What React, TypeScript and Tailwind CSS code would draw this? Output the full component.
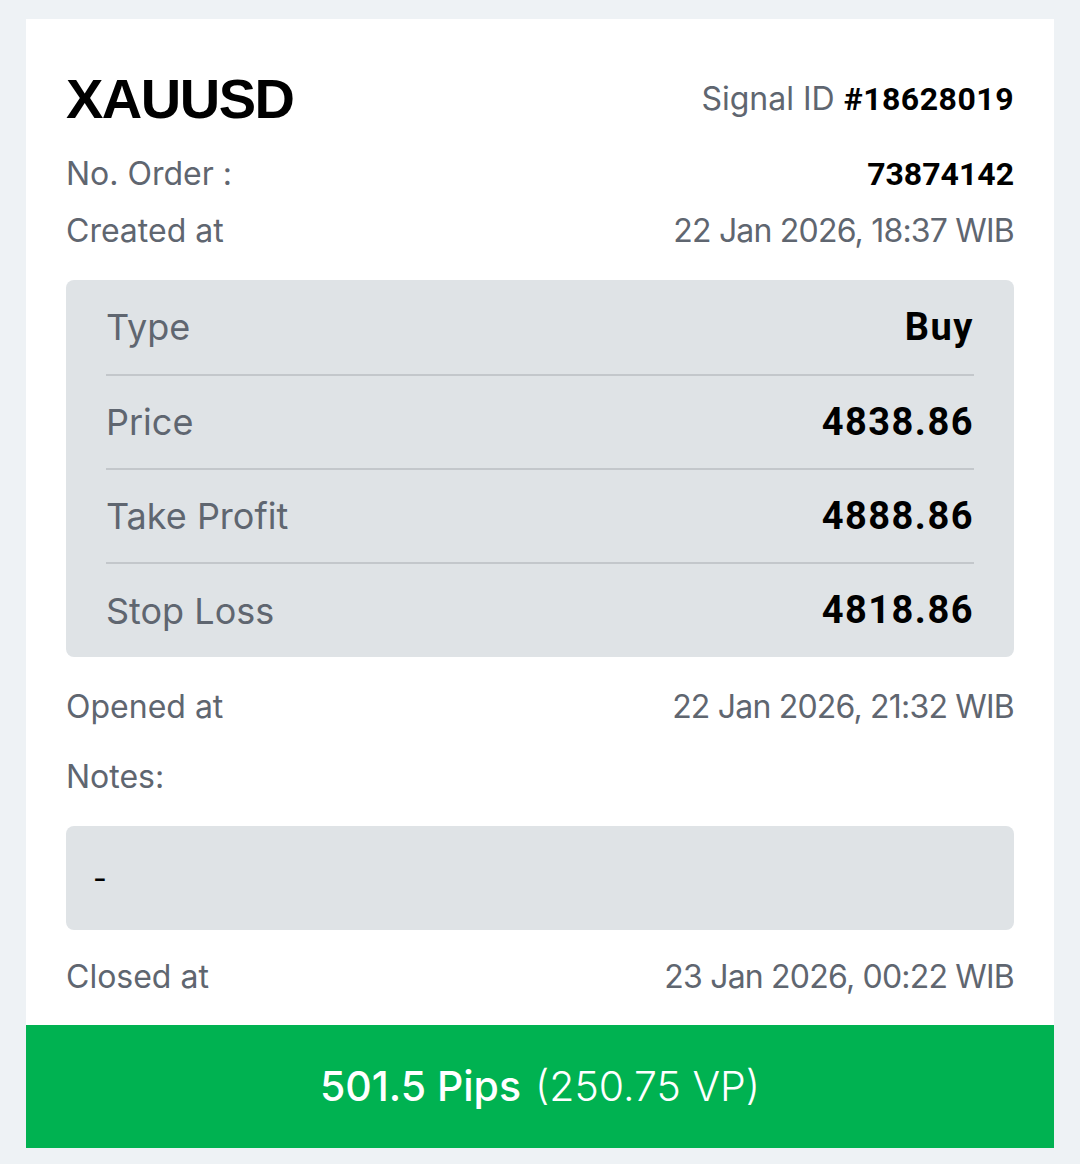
import React from 'react';

const label = "font-['Inter',sans-serif] text-[32px] text-[#5f6670]";
const date = "font-['Inter',sans-serif] text-[32px] tracking-[-0.8px] text-[#5f6670]";
const bold = "font-['Roboto',sans-serif] font-bold text-black";

function InfoRow({ left, right, className }: { left: React.ReactNode; right?: React.ReactNode; className: string }) {
  return (
    <div className={`flex items-center justify-between ${className}`}>
      <div className={label}>{left}</div>
      {right}
    </div>
  );
}

const detail = [
  { name: 'Type', value: 'Buy', h: 'h-[96px]' },
  { name: 'Price', value: '4838.86', h: 'h-[94px]' },
  { name: 'Take Profit', value: '4888.86', h: 'h-[94px]' },
  { name: 'Stop Loss', value: '4818.86', h: 'h-[93px]' },
];

export default function App() {
  return (
    <div className="min-h-[1164px] w-full bg-[#eef2f5] px-[26px] pt-[19px]">
      <div className="bg-white pt-[41px]">
        <div className="px-[40px]">
          <div className="flex h-[78px] items-center justify-between">
            <div className="font-['Liberation_Sans',sans-serif] text-[56px] font-bold tracking-[-1.5px] text-black">XAUUSD</div>
            <div className="flex items-baseline gap-[9px]">
              <span className={label}>Signal ID</span>
              <span className={`${bold} text-[32px] tracking-[0.5px]`}>#18628019</span>
            </div>
          </div>
          <InfoRow
            className="mt-[7px] h-[58px]"
            left="No. Order :"
            right={<span className={`${bold} text-[32px]`}>73874142</span>}
          />
          <InfoRow className="h-[56px]" left="Created at" right={<span className={date}>22 Jan 2026, 18:37 WIB</span>} />

          <div className="mt-[21px] rounded-[8px] bg-[#dfe3e6] px-[40px]">
            {detail.map((d, i) => (
              <div
                key={d.name}
                className={`flex items-center justify-between ${d.h} ${i < detail.length - 1 ? 'border-b-2 border-[#c3c7cb]' : ''}`}
              >
                <span className="font-['Inter',sans-serif] text-[36px] text-[#5f6670]">{d.name}</span>
                <span className={`${bold} text-[38px] tracking-[1.5px]`}>{d.value}</span>
              </div>
            ))}
          </div>

          <InfoRow className="mt-[22px] h-[56px]" left="Opened at" right={<span className={date}>22 Jan 2026, 21:32 WIB</span>} />
          <InfoRow className="mt-[14px] h-[56px]" left="Notes:" />

          <div className="mt-[21px] flex h-[104px] items-center rounded-[8px] bg-[#dfe3e6] pl-[27px] font-['Inter',sans-serif] text-[30px] text-black">
            -
          </div>

          <InfoRow className="mt-[19px] h-[56px]" left="Closed at" right={<span className={date}>23 Jan 2026, 00:22 WIB</span>} />
        </div>

        <div className="mt-[20px] flex h-[123px] items-center justify-center bg-[#00b251] font-['Inter',sans-serif] text-[41px] text-white">
          <span className="font-medium">501.5 Pips</span>
          <span className="ml-[14px] font-light">(250.75 VP)</span>
        </div>
      </div>
    </div>
  );
}
